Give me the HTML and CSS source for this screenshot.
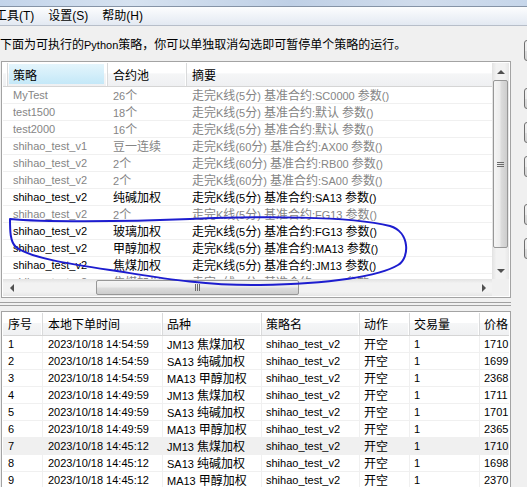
FILE: index.html
```html
<!DOCTYPE html>
<html lang="zh-CN">
<head>
  <meta charset="UTF-8" />
  <title>策略管理</title>
  <link rel="stylesheet" href="styles.css">
</head>
<body>
  <div class="titlebar"></div>
  <div class="menubar">
    <span class="menu-item">工具(T)</span>
    <span class="menu-item">设置(S)</span>
    <span class="menu-item">帮助(H)</span>
  </div>

  <div class="main">
    <div class="content">
      <p class="hint"><span class="zh">下面为可执行的</span>Python<span class="zh">策略，你可以单独取消勾选即可暂停单个策略的运行。</span></p>

      <div class="frame frame-top">
        <div class="viewport">
          <div class="head">
            <div class="hcell c-pad"></div>
            <div class="hcell c-name sorted">策略</div>
            <div class="hcell c-pool">合约池</div>
            <div class="hcell c-desc">摘要</div>
          </div>
          <div id="strategyRows"></div>
        </div>
        <div class="vscroll">
          <div class="sb-btn"><span class="arrow-up"></span></div>
          <div class="thumb-v"><span class="grip-v"></span></div>
          <div class="sb-fill"></div>
          <div class="sb-btn"><span class="arrow-down"></span></div>
        </div>
        <div class="hscroll">
          <div class="sb-btn"><span class="arrow-left"></span></div>
          <div class="thumb-h"><span class="grip-h"></span></div>
          <div class="sb-fill"></div>
          <div class="sb-btn"><span class="arrow-right"></span></div>
        </div>
        <div class="corner"></div>
      </div>

      <div class="splitter"></div>

      <div class="frame frame-bottom">
        <div class="viewport">
          <div class="head">
            <div class="hcell o-no">序号</div>
            <div class="hcell o-time">本地下单时间</div>
            <div class="hcell o-sym">品种</div>
            <div class="hcell o-strat">策略名</div>
            <div class="hcell o-act">动作</div>
            <div class="hcell o-qty">交易量</div>
            <div class="hcell o-price">价格</div>
          </div>
          <div id="orderRows"></div>
        </div>
      </div>
    </div>

    <div class="side">
      <div class="side-btn"></div>
      <div class="side-btn gap-lg"></div>
      <div class="side-btn"></div>
      <div class="side-btn"></div>
      <div class="side-btn gap-lg"></div>
      <div class="side-btn"></div>
    </div>
  </div>

  <svg class="annotation" width="527" height="487" viewBox="0 0 527 487">
    <path d="M10,219 C40,222 120,222 190,219 C260,216 350,216 390,226 C410,232 410,258 398,265 C380,276 330,284 260,285 C200,286 150,276 110,270 C70,264 30,258 16,247 C10,242 10,230 10,219" />
  </svg>

  <script>
    const strategies = [
      [false, 'MyTest', '26个', '走完K线(5分) 基准合约:SC0000 参数()'],
      [false, 'test1500', '18个', '走完K线(5分) 基准合约:默认 参数()'],
      [false, 'test2000', '16个', '走完K线(5分) 基准合约:默认 参数()'],
      [false, 'shihao_test_v1', '豆一连续', '走完K线(60分) 基准合约:AX00 参数()'],
      [false, 'shihao_test_v2', '2个', '走完K线(60分) 基准合约:RB00 参数()'],
      [false, 'shihao_test_v2', '2个', '走完K线(60分) 基准合约:SA00 参数()'],
      [true, 'shihao_test_v2', '纯碱加权', '走完K线(5分) 基准合约:SA13 参数()'],
      [false, 'shihao_test_v2', '2个', '走完K线(5分) 基准合约:FG13 参数()'],
      [true, 'shihao_test_v2', '玻璃加权', '走完K线(5分) 基准合约:FG13 参数()'],
      [true, 'shihao_test_v2', '甲醇加权', '走完K线(5分) 基准合约:MA13 参数()'],
      [true, 'shihao_test_v2', '焦煤加权', '走完K线(5分) 基准合约:JM13 参数()'],
      [false, 'shihao_test_v2', '焦煤加权', '走完K线(5分) 基准合约:JM13 参数()']
    ];

    const orders = [
      ['1', '2023/10/18 14:54:59', 'JM13 焦煤加权', '1710'],
      ['2', '2023/10/18 14:54:59', 'SA13 纯碱加权', '1699'],
      ['3', '2023/10/18 14:54:59', 'MA13 甲醇加权', '2368'],
      ['4', '2023/10/18 14:49:59', 'JM13 焦煤加权', '1711'],
      ['5', '2023/10/18 14:49:59', 'SA13 纯碱加权', '1701'],
      ['6', '2023/10/18 14:49:59', 'MA13 甲醇加权', '2365'],
      ['7', '2023/10/18 14:45:12', 'JM13 焦煤加权', '1710'],
      ['8', '2023/10/18 14:45:12', 'SA13 纯碱加权', '1698'],
      ['9', '2023/10/18 14:45:12', 'MA13 甲醇加权', '2370']
    ];

    // wrap chinese runs so they get the 12px cjk font
    const zh = s => s.replace(/([\u3000-\u303f\u4e00-\u9fff\uff00-\uffef]+)/g, '<span class="zh">$1</span>');

    document.getElementById('strategyRows').innerHTML = strategies.map(([on, name, pool, desc]) =>
      `<div class="row${on ? '' : ' off'}">
        <div class="cell c-pad"></div>
        <div class="cell c-name">${zh(name)}</div>
        <div class="cell c-pool">${zh(pool)}</div>
        <div class="cell c-desc">${zh(desc)}</div>
      </div>`).join('');

    document.getElementById('orderRows').innerHTML = orders.map(([no, time, sym, price]) =>
      `<div class="row grid${no === '7' ? ' current' : ''}">
        <div class="cell o-no">${no}</div>
        <div class="cell o-time">${time}</div>
        <div class="cell o-sym">${zh(sym)}</div>
        <div class="cell o-strat">shihao_test_v2</div>
        <div class="cell o-act">${zh('开空')}</div>
        <div class="cell o-qty">1</div>
        <div class="cell o-price">${price}</div>
      </div>`).join('');
  </script>
</body>
</html>
```

FILE: styles.css
```css
html, body {
  margin: 0;
}

body {
  position: relative;
  width: 527px;
  height: 487px;
  overflow: hidden;
  background-color: #f0f0f0;
  font-family: "Liberation Sans", "Noto Sans CJK SC", sans-serif;
  font-size: 11px;
  color: #000;
}

.zh {
  font-family: "Noto Sans CJK SC", sans-serif;
  font-size: 12px;
}

.titlebar {
  height: 6px;
  background: linear-gradient(90deg, #c3d4ea, #d6e2f0 25%, #bfd0e6 55%, #d0dcec 80%, #c6d6ea);
  border-bottom: 1px solid #8593a6;
}

.menubar {
  display: flex;
  height: 18px;
  margin-left: -12px;
  background: linear-gradient(#fcfdfe, #e3e9f2);
  border-bottom: 1px solid #b7bec9;
  font-size: 12px;
  line-height: 18px;
}

.menu-item {
  padding: 0 7px;
  white-space: nowrap;
}

.main {
  display: flex;
}

.content {
  width: 511px;
  flex: none;
}

.hint {
  margin: 10px 0 8px;
  line-height: 16px;
  white-space: nowrap;
}

/* list frames */
.frame {
  box-sizing: border-box;
  width: 510px;
  margin-left: 1px;
  border: 1px solid #a3a3a3;
  padding: 1px;
  background-color: #fff;
}

.frame-top {
  height: 237px;
  display: grid;
  grid-template-columns: 1fr 17px;
  grid-template-rows: 1fr 17px;
}

.frame-bottom {
  height: 190px;
}

.viewport {
  overflow: hidden;
  height: 100%;
}

.head {
  display: flex;
  height: 23px;
  border-bottom: 1px solid #d5d5d5;
  background: linear-gradient(#ffffff 0%, #ffffff 45%, #f5f6f7 46%, #eff0f2 100%);
  white-space: nowrap;
}

.frame-bottom .head {
  height: 22px;
}

.hcell {
  box-sizing: border-box;
  flex: none;
  padding-left: 5px;
  border-right: 1px solid #d9dadb;
  box-shadow: inset -1px 0 0 #fff;
  font-family: "Noto Sans CJK SC", sans-serif;
  font-size: 12px;
  line-height: 23px;
}

.frame-bottom .hcell {
  line-height: 22px;
}

.hcell.sorted {
  background: linear-gradient(#e4f5fc, #c4e8f8) 1px 1px / calc(100% - 4px) calc(100% - 3px) no-repeat;
}

.row {
  display: flex;
  height: 16px;
  border-bottom: 1px solid #f0f0f0;
  line-height: 16px;
  white-space: nowrap;
}

.row.off {
  color: #858585;
}

.row.current {
  background-color: #f0f0f0;
}

.cell {
  box-sizing: border-box;
  flex: none;
  padding-left: 5px;
  overflow: hidden;
}

.row.grid .cell {
  border-right: 1px solid #f0f0f0;
}

.c-pad { width: 5px; padding: 0; }
.c-name { width: 100px; }
.c-pool { width: 79px; }
.c-desc { width: 360px; }

.o-no { width: 40px; }
.o-time { width: 120px; }
.o-sym { width: 99px; padding-left: 4px; }
.o-strat { width: 98px; padding-left: 4px; }
.o-act { width: 50px; padding-left: 4px; }
.o-qty { width: 70px; padding-left: 4px; }
.o-price { width: 60px; padding-left: 4px; }

/* scrollbars */
.vscroll {
  display: flex;
  flex-direction: column;
  background: linear-gradient(90deg, #e2e2e2, #f2f2f2 25%, #f2f2f2 75%, #e6e6e6);
}

.hscroll {
  display: flex;
  background: linear-gradient(#e2e2e2, #f2f2f2 25%, #f2f2f2 75%, #e6e6e6);
}

.corner {
  background-color: #f0f0f0;
}

.sb-btn {
  flex: none;
  width: 17px;
  height: 17px;
  display: flex;
  align-items: center;
  justify-content: center;
}

.sb-fill {
  flex: 1;
}

.thumb-v {
  flex: none;
  height: 166px;
  margin: 0 1px;
  border: 1px solid #979797;
  border-radius: 2px;
  background: linear-gradient(90deg, #f5f5f5, #ececec 45%, #dcdcdc 55%, #cdcdcd);
  display: flex;
  align-items: center;
  justify-content: center;
}

.thumb-h {
  flex: none;
  width: 201px;
  margin: 1px 0 1px 76px;
  border: 1px solid #979797;
  border-radius: 2px;
  background: linear-gradient(#f5f5f5, #ececec 45%, #dcdcdc 55%, #cdcdcd);
  display: flex;
  align-items: center;
  justify-content: center;
}

.grip-v {
  width: 7px;
  height: 5px;
  background: repeating-linear-gradient(#6a6a6a 0 1px, transparent 1px 2px);
}

.grip-h {
  width: 5px;
  height: 7px;
  background: repeating-linear-gradient(90deg, #6a6a6a 0 1px, transparent 1px 2px);
}

.arrow-up,
.arrow-down,
.arrow-left,
.arrow-right {
  width: 0;
  height: 0;
  border: 4px solid transparent;
}

.arrow-up { border-bottom-color: #505050; border-top-width: 0; }
.arrow-down { border-top-color: #505050; border-bottom-width: 0; }
.arrow-left { border-right-color: #505050; border-left-width: 0; }
.arrow-right { border-left-color: #505050; border-right-width: 0; }

.splitter {
  height: 2px;
  margin: 4px 0 5px;
  border-top: 1px solid #a0a0a0;
  border-bottom: 1px solid #a0a0a0;
}

/* buttons cut off at the window edge */
.side {
  flex: 1;
  overflow: hidden;
  padding-top: 14px;
}

.side-btn {
  box-sizing: border-box;
  width: 40px;
  height: 21px;
  margin: 13px 0 0 13px;
  border: 1px solid #707070;
  border-radius: 3px;
  background: linear-gradient(#f2f2f2, #ebebeb 50%, #dddddd 51%, #cfcfcf);
}

.side-btn:first-child {
  margin-top: 0;
}

.side-btn.gap-lg {
  margin-top: 27px;
}

.annotation {
  position: absolute;
  top: 0;
  left: 0;
  pointer-events: none;
}

.annotation path {
  fill: none;
  stroke: #1d1dcf;
  stroke-width: 2;
  stroke-linecap: round;
}
```
